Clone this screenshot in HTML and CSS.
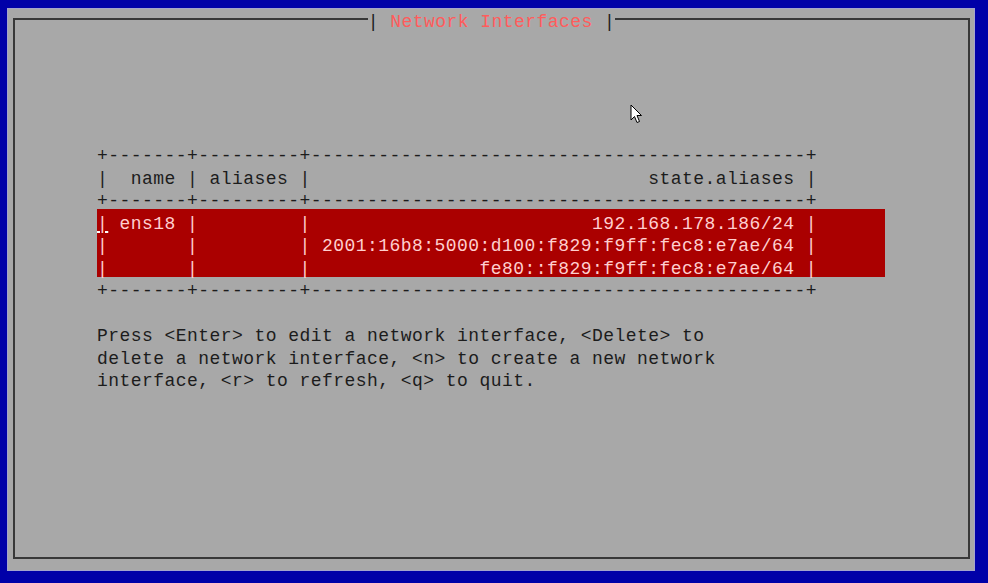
FILE: index.html
```html
<!DOCTYPE html>
<html>
	<head>
		<meta charset="UTF-8">
		<title>Network Interfaces</title>
		<link rel="stylesheet" href="styles.css">
	</head>
	<body>
		<div class="screen">
			<div class="panel">
				<div class="frame">
					<div class="caption"><span class="title">| <span class="name">Network Interfaces</span> |</span></div>
					<div class="list">
						<div class="row">+-------+---------+--------------------------------------------+</div>
						<div class="row">|  name | aliases |                              state.aliases |</div>
						<div class="row">+-------+---------+--------------------------------------------+</div>
						<div class="sel">
							<div class="row"><span class="cur">|</span> ens18 |         |                         192.168.178.186/24 |</div>
							<div class="row">|       |         | 2001:16b8:5000:d100:f829:f9ff:fec8:e7ae/64 |</div>
							<div class="row">|       |         |               fe80::f829:f9ff:fec8:e7ae/64 |</div>
						</div>
						<div class="row">+-------+---------+--------------------------------------------+</div>
						<div class="row"></div>
						<div class="row">Press &lt;Enter&gt; to edit a network interface, &lt;Delete&gt; to</div>
						<div class="row">delete a network interface, &lt;n&gt; to create a new network</div>
						<div class="row">interface, &lt;r&gt; to refresh, &lt;q&gt; to quit.</div>
					</div>
				</div>
			</div>
		</div>
		<!-- mouse pointer -->
		<svg class="pointer" width="13" height="20" viewBox="0 0 13 20">
			<path d="M1 1 L1 16 L4.5 12.5 L7 18.5 L9.5 17.5 L7 11.5 L11.5 11.5 Z" fill="#fff" stroke="#000" stroke-width="1" stroke-linejoin="miter"/>
		</svg>
	</body>
</html>
```

FILE: styles.css
```css
*{
	margin: 0;
	padding: 0;
}
body{
	width: 988px;
	height: 583px;
	overflow: hidden;
	position: relative;
	background: #0000a8;
	font: 18px/22.5px "Liberation Mono", "DejaVu Sans Mono", monospace;
	letter-spacing: 0.45px;
}
.screen{
	padding: 8px 0 0 7px;
}
.panel{
	width: 968px;
	height: 563px;
	box-sizing: border-box;
	border: 1px solid #a4a4cc;
	background: #a8a8a8;
	padding: 9px 0 0 5px;
}
.frame{
	width: 957px;
	height: 541px;
	box-sizing: border-box;
	border: 2px solid #383838;
}
.caption{
	display: flex;
	justify-content: center;
	margin-top: -9px;
}
.title{
	background: #a8a8a8;
	color: #1c1c1c;
	white-space: pre;
}
.title .name{
	color: #ff5c5c;
}
.list{
	margin-top: 108px;
	padding-left: 82px;
}
.row{
	height: 22.5px;
	box-sizing: border-box;
	padding-top: 3.5px;
	white-space: pre;
	color: #1c1c1c;
}
.sel{
	width: 788px;
	background: #aa0000;
}
.sel .row{
	color: #ffcfcf;
}
.cur{
	text-decoration: underline 2px #fff;
	text-underline-offset: 2px;
}
.pointer{
	position: absolute;
	left: 630px;
	top: 104px;
}
```
